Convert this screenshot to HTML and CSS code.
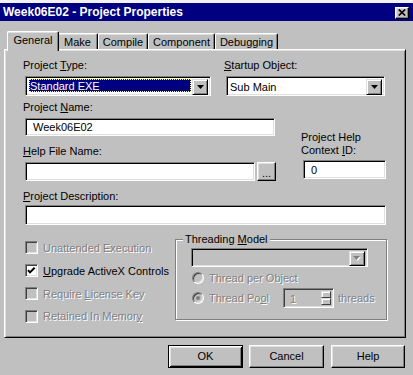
FILE: index.html
```html
<!DOCTYPE html>
<html>
<head>
<meta charset="utf-8">
<title>Week06E02 - Project Properties</title>
<link rel="stylesheet" href="styles.css">
</head>
<body>
<div class="window">
  <div class="topstrip"></div>
  <div class="titlebar">
    <span class="title">Week06E02 - Project Properties</span>
    <span class="close"><svg width="8" height="7" viewBox="0 0 8 7"><path d="M0.8 0.5 L7.2 6.5 M7.2 0.5 L0.8 6.5" stroke="#000" stroke-width="1.7" fill="none"/></svg></span>
  </div>
  <div class="tabs">
    <div class="tab active">General</div>
    <div class="tab t-make">Make</div>
    <div class="tab t-compile">Compile</div>
    <div class="tab t-component">Component</div>
    <div class="tab t-debug">Debugging</div>
  </div>
  <div class="panel">
    <div class="row1">
      <div class="col-type">
        <span class="lbl">Project <u>T</u>ype:</span>
        <div class="combo gap4">
          <span class="combo-text selected">Standard EXE</span>
          <span class="drop"><svg width="7" height="4" viewBox="0 0 7 4"><path d="M0 0H7L3.5 4Z" fill="#000"/></svg></span>
        </div>
      </div>
      <div class="col-startup">
        <span class="lbl"><u>S</u>tartup Object:</span>
        <div class="combo gap4">
          <span class="combo-text">Sub Main</span>
          <span class="drop"><svg width="7" height="4" viewBox="0 0 7 4"><path d="M0 0H7L3.5 4Z" fill="#000"/></svg></span>
        </div>
      </div>
    </div>
    <div class="mid">
      <div class="mid-left">
        <span class="lbl">Project <u>N</u>ame:</span>
        <div class="tb name-tb">Week06E02</div>
        <span class="lbl lbl-help"><u>H</u>elp File Name:</span>
        <div class="helprow">
          <div class="tb help-tb"></div>
          <div class="btn dots">...</div>
        </div>
      </div>
      <div class="mid-right">
        <span class="lbl lbl-ctx">Project Help<br>Context <u>I</u>D:</span>
        <div class="tb ctx-tb">0</div>
      </div>
    </div>
    <span class="lbl lbl-desc"><u>P</u>roject Description:</span>
    <div class="tb desc-tb"></div>
    <div class="bottom">
      <div class="checks">
        <div class="chk-row disabled"><span class="cb"></span><span class="dtext">Unattended Execution</span></div>
        <div class="chk-row"><span class="cb on"><svg width="9" height="9" viewBox="0 0 9 9"><path d="M1 4.2 L3 6.4 L7.6 1.8" stroke="#000" stroke-width="2" fill="none"/></svg></span><span><u>U</u>pgrade ActiveX Controls</span></div>
        <div class="chk-row disabled"><span class="cb"></span><span class="dtext">Require <u>L</u>icense Key</span></div>
        <div class="chk-row disabled last"><span class="cb"></span><span class="dtext">Retained In Memor<u>y</u></span></div>
      </div>
      <fieldset class="group">
        <legend>Threading <u>M</u>odel</legend>
        <div class="combo combo-dis">
          <span class="combo-text"></span>
          <span class="drop"><svg width="8" height="5" viewBox="0 0 8 5"><path d="M1 1H8L4.5 5Z" fill="#fff"/><path d="M0 0H7L3.5 4Z" fill="#808080"/></svg></span>
        </div>
        <div class="radio-row r1">
          <span class="radio"></span><span class="dtext">Thread per Object</span>
        </div>
        <div class="radio-row r2">
          <span class="radio"><span class="dot"></span></span><span class="dtext rlabel">Thread Po<u>o</u>l</span>
          <div class="spin">
            <span class="spin-text">1</span>
            <span class="spin-btns"><span class="sb"></span><span class="sb"></span></span>
          </div>
          <span class="dtext threads">threads</span>
        </div>
      </fieldset>
    </div>
  </div>
  <div class="buttons">
    <div class="btn dlg default">OK</div>
    <div class="btn dlg b-cancel">Cancel</div>
    <div class="btn dlg b-help">Help</div>
  </div>
</div>
</body>
</html>
```
FILE: styles.css
```css
html, body {
  margin: 0;
  padding: 0;
  background: #c0c0c0;
}
body {
  width: 413px;
  height: 375px;
  overflow: hidden;
  font-family: "Liberation Sans", Arial, sans-serif;
  font-size: 11px;
  color: #000;
}
u { text-decoration: underline; text-underline-offset: 1px; }
.window {
  width: 413px;
  height: 375px;
  background: #c0c0c0;
}
.topstrip {
  height: 3px;
  background: #f2f2f2;
}
.titlebar {
  height: 18px;
  background: #000080;
  display: flex;
  align-items: center;
  justify-content: space-between;
  padding: 0 4px 0 3px;
}
.title {
  color: #fff;
  font-weight: bold;
  font-size: 12px;
  line-height: 18px;
  white-space: nowrap;
}
.close {
  width: 14px;
  height: 12px;
  margin-top: 1px;
  box-sizing: border-box;
  background: #c0c0c0;
  border: 1px solid;
  border-color: #fff #000 #000 #fff;
  box-shadow: inset -1px -1px #808080, inset 1px 1px #dfdfdf;
  display: flex;
  align-items: center;
  justify-content: center;
}
.tabs {
  margin-top: 10px;
  height: 18px;
  display: flex;
  align-items: flex-end;
  padding-left: 9px;
}
.tab {
  height: 16px;
  box-sizing: border-box;
  border-top: 1px solid #fff;
  border-left: 1px solid #fff;
  border-right: 1px solid #000;
  border-radius: 2px 2px 0 0;
  box-shadow: inset -1px 0 #808080, inset 0 1px #dfdfdf;
  background: #c0c0c0;
  line-height: 13px;
  padding-top: 2px;
  text-align: center;
  white-space: nowrap;
}
.tab.active {
  width: 52px;
  height: 20px;
  margin: 0 -2px -2px -2px;
  position: relative;
  z-index: 1;
}
.t-make { width: 41px; }
.t-compile { width: 50px; }
.t-component { width: 67px; }
.t-debug { width: 63px; }

.panel {
  margin-left: 4px;
  width: 402px;
  height: 289px;
  box-sizing: border-box;
  border: 1px solid;
  border-color: #fff #000 #000 #fff;
  box-shadow: inset 1px 1px #dfdfdf, inset -1px -1px #808080;
  padding: 9px 0 0 20px;
}
.lbl {
  display: block;
  line-height: 13px;
  margin-left: -2px;
  white-space: nowrap;
}
.row1 { display: flex; }
.col-type { width: 186px; }
.col-startup { width: 159px; margin-left: 15px; }
.gap4 { margin-top: 4px; }

.combo {
  display: flex;
  height: 20px;
  box-sizing: border-box;
  border: 1px solid;
  border-color: #808080 #fff #fff #808080;
  box-shadow: inset 1px 1px #000, inset -1px -1px #dfdfdf;
  background: #fff;
  padding: 2px;
}
.combo-text {
  flex: 1;
  margin: 1px;
  line-height: 14px;
  white-space: nowrap;
}
.combo-text.selected {
  background: #000080;
  color: #fff;
  box-sizing: border-box;
  border: 1px dotted #ffff80;
  line-height: 13px;
  margin: 0 1px 1px 1px;
}
.drop {
  width: 16px;
  height: 16px;
  box-sizing: border-box;
  background: #c0c0c0;
  border: 1px solid;
  border-color: #dfdfdf #000 #000 #dfdfdf;
  box-shadow: inset 1px 1px #fff, inset -1px -1px #808080;
  display: flex;
  align-items: center;
  justify-content: center;
}

.mid { display: flex; margin-top: 5px; }
.mid-left { width: 251px; }
.mid-right { width: 83px; margin-left: 27px; }

.tb {
  box-sizing: border-box;
  border: 1px solid;
  border-color: #808080 #fff #fff #808080;
  box-shadow: inset 1px 1px #000, inset -1px -1px #dfdfdf;
  background: #fff;
  padding-left: 7px;
  display: flex;
  align-items: center;
  white-space: nowrap;
}
.name-tb { margin-top: 4px; width: 250px; height: 18px; }
.lbl-help { margin-top: 9px; }
.helprow { display: flex; margin-top: 4px; height: 19px; }
.help-tb { width: 230px; height: 19px; }
.btn {
  box-sizing: border-box;
  background: #c0c0c0;
  border: 1px solid;
  border-color: #fff #000 #000 #fff;
  box-shadow: inset -1px -1px #808080, inset 1px 1px #dfdfdf;
  display: flex;
  align-items: center;
  justify-content: center;
  white-space: nowrap;
}
.dots {
  width: 19px;
  height: 19px;
  margin-left: 2px;
  line-height: 13px;
  padding-top: 3px;
}
.lbl-ctx { margin-top: 30px; }
.ctx-tb { margin-top: 3px; width: 83px; height: 19px; }

.lbl-desc { margin-top: 9px; }
.desc-tb { margin-top: 2px; width: 361px; height: 20px; }

.bottom { display: flex; margin-top: 8px; }
.checks { width: 150px; padding-top: 3px; }
.chk-row {
  height: 23px;
  display: flex;
  align-items: center;
  gap: 5px;
  white-space: nowrap;
}
.chk-row.last { height: 22px; }
.cb {
  width: 13px;
  height: 13px;
  box-sizing: border-box;
  border: 1px solid;
  border-color: #808080 #fff #fff #808080;
  box-shadow: inset 1px 1px #404040, inset -1px -1px #dfdfdf;
  background: #c0c0c0;
  display: flex;
  align-items: center;
  justify-content: center;
  flex: none;
}
.cb.on { background: #fff; }
.dtext {
  color: #808080;
  text-shadow: 1px 1px 0 #fff;
}

.group {
  margin: 0;
  padding: 0 0 0 15px;
  width: 212px;
  height: 87px;
  box-sizing: border-box;
  min-width: 0;
  border: 1px solid #808080;
  box-shadow: inset 1px 1px #fff, 1px 1px #fff;
}
.group legend {
  padding: 0 2px;
  margin-left: -8px;
  line-height: 13px;
  background: #c0c0c0;
  white-space: nowrap;
}
.combo-dis {
  margin-top: 2px;
  width: 177px;
  height: 19px;
  background: #c0c0c0;
}
.combo-dis .drop { height: 15px; }
.radio-row {
  display: flex;
  align-items: center;
  white-space: nowrap;
}
.r1 { margin-top: 4px; height: 13px; }
.r2 { margin-top: 4px; height: 20px; }
.radio {
  width: 12px;
  height: 12px;
  box-sizing: border-box;
  margin-left: 1px;
  margin-right: 5px;
  border-radius: 50%;
  border: 1px solid;
  border-color: #808080 #fff #fff #808080;
  box-shadow: inset 1px 1px #404040, inset -1px -1px #dfdfdf;
  background: #c0c0c0;
  display: flex;
  align-items: center;
  justify-content: center;
  flex: none;
}
.dot {
  width: 4px;
  height: 4px;
  border-radius: 50%;
  background: #808080;
}
.rlabel { width: 74px; }
.spin {
  display: flex;
  width: 51px;
  height: 20px;
  box-sizing: border-box;
  border: 1px solid;
  border-color: #808080 #fff #fff #808080;
  box-shadow: inset 1px 1px #404040, inset -1px -1px #dfdfdf;
  background: #c0c0c0;
  padding: 2px;
}
.spin-text {
  flex: 1;
  padding-left: 4px;
  line-height: 16px;
  color: #808080;
  text-shadow: 1px 1px 0 #fff;
}
.spin-btns {
  width: 10px;
  display: flex;
  flex-direction: column;
}
.sb {
  flex: 1;
  box-sizing: border-box;
  background: #c0c0c0;
  border: 1px solid;
  border-color: #dfdfdf #404040 #404040 #dfdfdf;
  box-shadow: inset 1px 1px #fff;
}
.threads { margin-left: 4px; }

.buttons {
  display: flex;
  justify-content: flex-end;
  margin-top: 7px;
  padding-right: 8px;
}
.dlg {
  width: 75px;
  height: 23px;
  line-height: 13px;
}
.default {
  border: 1px solid #000;
  box-shadow: inset 1px 1px #fff, inset -1px -1px #000, inset 2px 2px #dfdfdf, inset -2px -2px #808080;
}
.b-cancel { margin-left: 6px; }
.b-help { margin-left: 7px; width: 74px; }
```
